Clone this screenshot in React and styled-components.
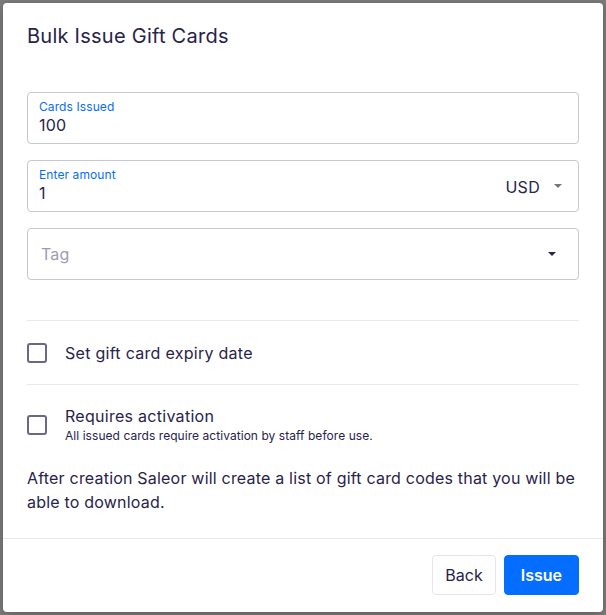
import styled, { createGlobalStyle } from "styled-components";

const GlobalStyle = createGlobalStyle`
  * {
    box-sizing: border-box;
  }
  body {
    margin: 0;
    font-family: Inter, "Noto Sans", sans-serif;
    color: #28234a;
  }
`;

const Backdrop = styled.div`
  min-height: 100vh;
  background: #7c7c7c;
  padding: 3px;
  display: flex;
  justify-content: center;
`;

const Dialog = styled.div`
  width: 600px;
  height: 609px;
  background: #fff;
  border-radius: 4px;
  box-shadow: 0 2px 10px rgba(0, 0, 0, 0.25);
  display: flex;
  flex-direction: column;
`;

const Title = styled.h2`
  margin: 0;
  padding: 21px 24px 0;
  font-size: 20px;
  line-height: 24px;
  font-weight: 400;
  letter-spacing: 0.25px;
`;

const Content = styled.div`
  padding: 44px 24px 0;
  display: flex;
  flex-direction: column;
`;

const Fields = styled.div`
  display: flex;
  flex-direction: column;
  gap: 16px;
`;

const Field = styled.div`
  height: 52px;
  border: 1px solid #c8c8cc;
  border-radius: 4px;
  display: flex;
  align-items: center;
  padding: 0 ${(p) => p.$right || 16}px 0 11px;
`;

const FieldBody = styled.div`
  flex: 1;
  display: flex;
  flex-direction: column;
`;

const Label = styled.span`
  font-size: 12px;
  line-height: 16px;
  color: #056dff;
  margin-top: -2px;
  letter-spacing: 0.1px;
`;

const Value = styled.span`
  font-size: 16px;
  line-height: 20px;
  letter-spacing: 0.2px;
`;

const Placeholder = styled.span`
  flex: 1;
  font-size: 16px;
  line-height: 20px;
  color: #9e9cae;
  padding-left: 2px;
  letter-spacing: 0.2px;
`;

const Currency = styled.span`
  font-size: 16px;
  margin-right: 14px;
  padding-top: 1px;
  letter-spacing: 0.3px;
`;

const Arrow = styled.svg`
  display: block;
  flex: none;
`;

const Divider = styled.div`
  height: 1px;
  background: #e9e9ec;
`;

const CheckRow = styled.label`
  display: flex;
  align-items: ${(p) => (p.$top ? "flex-start" : "center")};
  gap: 18px;
  padding: ${(p) => p.$pad};
`;

const Box = styled.span`
  width: 20px;
  height: 20px;
  border: 2px solid #6b6886;
  border-radius: 3px;
  flex: none;
  margin-top: ${(p) => p.$offset || 0}px;
`;

const CheckText = styled.div`
  display: flex;
  flex-direction: column;
`;

const CheckLabel = styled.span`
  font-size: 16px;
  line-height: 20px;
  letter-spacing: 0.28px;
`;

const Caption = styled.span`
  font-size: 12px;
  line-height: 14px;
  margin-top: 3px;
  letter-spacing: 0.05px;
`;

const Note = styled.p`
  margin: 3px 0 0;
  font-size: 16px;
  line-height: 24px;
  letter-spacing: 0.2px;
`;

const Footer = styled.div`
  margin-top: auto;
  border-top: 1px solid #e9e9ec;
  padding: 16px 24px 17px;
  display: flex;
  justify-content: flex-end;
  gap: 8px;
`;

const Button = styled.button`
  height: 40px;
  padding: 0 ${(p) => (p.$primary ? 16 : 12)}px;
  border-radius: 4px;
  border: 1px solid ${(p) => (p.$primary ? "#056dff" : "#e6e6ea")};
  background: ${(p) => (p.$primary ? "#056dff" : "#fff")};
  color: ${(p) => (p.$primary ? "#fff" : "#28234a")};
  font-family: inherit;
  font-size: 16px;
  font-weight: ${(p) => (p.$primary ? 600 : 400)};
  cursor: pointer;
`;

const Caret = ({ color }) => (
  <Arrow width="8" height="4" viewBox="0 0 8 4">
    <path d="M0 0h8L4 4z" fill={color} />
  </Arrow>
);

export default function App() {
  return (
    <>
      <GlobalStyle />
      <Backdrop>
        <Dialog>
          <Title>Bulk Issue Gift Cards</Title>
          <Content>
            <Fields>
              <Field>
                <FieldBody>
                  <Label>Cards Issued</Label>
                  <Value>100</Value>
                </FieldBody>
              </Field>
              <Field>
                <FieldBody>
                  <Label>Enter amount</Label>
                  <Value>1</Value>
                </FieldBody>
                <Currency>USD</Currency>
                <Caret color="#77767f" />
              </Field>
              <Field $right={22}>
                <Placeholder>Tag</Placeholder>
                <Caret color="#28234a" />
              </Field>
            </Fields>
            <div style={{ height: 40 }} />
            <Divider />
            <CheckRow $pad="22px 0 21px">
              <Box />
              <CheckLabel>Set gift card expiry date</CheckLabel>
            </CheckRow>
            <Divider />
            <CheckRow $top $pad="21px 0 20px">
              <Box $offset={9} />
              <CheckText>
                <CheckLabel>Requires activation</CheckLabel>
                <Caption>
                  All issued cards require activation by staff before use.
                </Caption>
              </CheckText>
            </CheckRow>
            <Note>
              After creation Saleor will create a list of gift card codes that
              you will be able to download.
            </Note>
          </Content>
          <Footer>
            <Button>Back</Button>
            <Button $primary>Issue</Button>
          </Footer>
        </Dialog>
      </Backdrop>
    </>
  );
}
